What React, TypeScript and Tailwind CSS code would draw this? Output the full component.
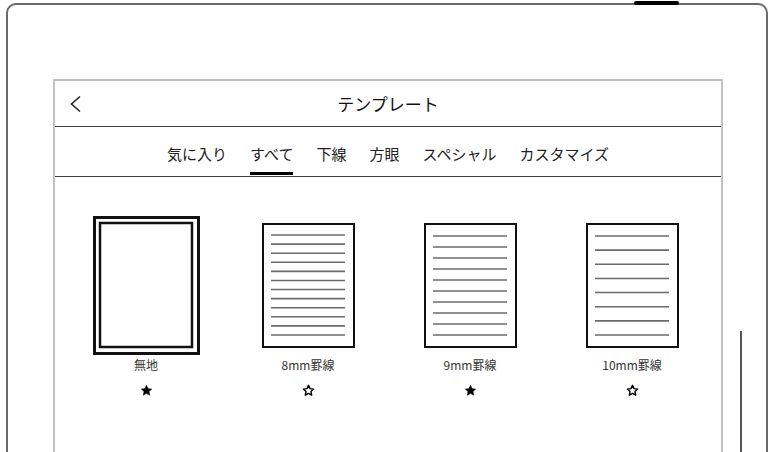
import * as React from 'react';

type Template = {
  name: string;
  lines: number;
  favorite: boolean;
  selected?: boolean;
};

const templates: Template[] = [
  { name: '無地', lines: 0, favorite: true, selected: true },
  { name: '8mm罫線', lines: 12, favorite: false },
  { name: '9mm罫線', lines: 10, favorite: true },
  { name: '10mm罫線', lines: 8, favorite: false },
];

const tabs = ['気に入り', 'すべて', '下線', '方眼', 'スペシャル', 'カスタマイズ'];

const STAR = 'M12 2.5l2.9 6.1 6.6.8-4.9 4.6 1.3 6.6L12 17.3l-5.9 3.3 1.3-6.6-4.9-4.6 6.6-.8z';

function Star({ filled }: { filled: boolean }) {
  return (
    <svg width="13" height="13" viewBox="0 0 24 24">
      <path d={STAR} fill={filled ? '#000' : 'none'} stroke="#000" strokeWidth={filled ? 1 : 2.6} strokeLinejoin="round" />
    </svg>
  );
}

function Thumbnail({ lines }: { lines: number }) {
  // first line at 12-13px, last at 112px inside a 93x125 sheet
  const first = lines === 12 ? 12 : 13;
  const step = lines > 1 ? (112 - first) / (lines - 1) : 0;
  return (
    <svg width="93" height="125" viewBox="0 0 93 125">
      <rect x="1" y="1" width="91" height="123" fill="#fff" stroke="#111" strokeWidth="2" />
      {Array.from({ length: lines }).map((_, i) => (
        <line key={i} x1="9" x2="83" y1={first + i * step} y2={first + i * step} stroke="#6b6b6b" strokeWidth="1.6" />
      ))}
    </svg>
  );
}

function SelectedBlank() {
  return (
    <svg width="107" height="139" viewBox="0 0 107 139">
      <rect x="1.5" y="1.5" width="104" height="136" fill="#fff" stroke="#111" strokeWidth="3" />
      <rect x="7" y="7" width="92" height="124" fill="#fff" stroke="#111" strokeWidth="2.5" />
    </svg>
  );
}

export default function App() {
  return (
    <div
      className="relative w-[773px] h-[452px] overflow-hidden bg-white text-[#222]"
      style={{ fontFamily: '"Noto Sans CJK JP", "Noto Sans", sans-serif' }}
    >
      {/* device frame */}
      <div className="ml-[6px] mt-[3px] w-[762px] h-[470px] border-2 border-[#6a6a6a] rounded-t-[10px] flex items-start">
        {/* dialog */}
        <div className="ml-[45px] mt-[74px] w-[670px] h-[400px] border-2 border-[#c2c2c2] bg-white flex flex-col">
          <div className="h-[46px] border-b border-[#444] grid grid-cols-[1fr_auto_1fr] items-center">
            <div className="pl-[14px] flex items-center">
              <svg width="14" height="20" viewBox="0 0 14 20">
                <polyline points="11,2.5 2.5,10 11,17.5" fill="none" stroke="#222" strokeWidth="1.6" />
              </svg>
            </div>
            <div className="text-[17px] leading-none text-[#111]">テンプレート</div>
            <div />
          </div>

          <div className="h-[50px] border-b border-[#444] flex justify-center gap-[23px] pt-[3px]">
            {tabs.map((t) => (
              <div key={t} className="relative h-full flex items-center text-[15px] leading-none text-[#222]">
                {t}
                {t === 'すべて' && <div className="absolute left-0 right-0 bottom-[1px] h-[3px] bg-black" />}
              </div>
            ))}
          </div>

          <div className="pl-[10px] pt-[39px] grid grid-cols-[repeat(4,162px)]">
            {templates.map((tp) => (
              <div key={tp.name} className="flex flex-col items-center">
                <div className="w-[107px] h-[139px] flex items-center justify-center">
                  {tp.selected ? <SelectedBlank /> : <Thumbnail lines={tp.lines} />}
                </div>
                <div className="mt-[2px] text-[12px] leading-[16px] text-[#333]">{tp.name}</div>
                <div className="mt-[11px] flex">
                  <Star filled={tp.favorite} />
                </div>
              </div>
            ))}
          </div>
        </div>

        {/* scroll indicator */}
        <div className="ml-[17px] mt-[326px] w-[2px] h-[140px] bg-[#555]" />
      </div>

      {/* power button on the top edge */}
      <div className="absolute left-[634px] top-[1px] w-[45px] h-[4px] rounded-full bg-black" />
    </div>
  );
}
